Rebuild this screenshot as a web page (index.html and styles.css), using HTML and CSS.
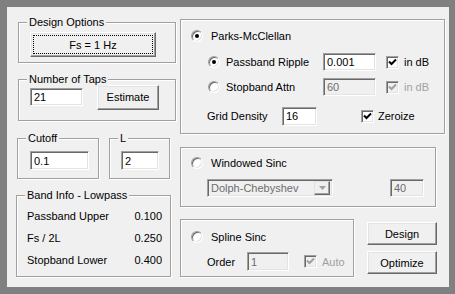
FILE: index.html
```html
<!DOCTYPE html>
<html lang="en">
<head>
    <meta charset="UTF-8">
    <title>FIR Design</title>
    <link rel="stylesheet" href="styles.css">
</head>
<body>
    <div class="panel">
        <!-- Left column: options, taps, cutoff, band info -->
        <div class="col-left">
            <div class="group g-design">
                <span class="legend">Design Options</span>
                <div class="btn btn-fs"><span class="focus">Fs = 1 Hz</span></div>
            </div>

            <div class="group g-taps">
                <span class="legend">Number of Taps</span>
                <div class="edit taps-edit">21</div>
                <div class="btn btn-estimate">Estimate</div>
            </div>

            <div class="pair">
                <div class="group g-cutoff">
                    <span class="legend">Cutoff</span>
                    <div class="edit cutoff-edit">0.1</div>
                </div>
                <div class="group g-l">
                    <span class="legend">L</span>
                    <div class="edit l-edit">2</div>
                </div>
            </div>

            <div class="group g-band">
                <span class="legend">Band Info - Lowpass</span>
                <div class="band-row"><span>Passband Upper</span><span>0.100</span></div>
                <div class="band-row"><span>Fs / 2L</span><span>0.250</span></div>
                <div class="band-row"><span>Stopband Lower</span><span>0.400</span></div>
            </div>
        </div>

        <!-- Right column: design methods -->
        <div class="col-right">
            <div class="group g-parks">
                <div class="row row-1">
                    <span class="radio checked"></span>
                    <span class="label">Parks-McClellan</span>
                </div>
                <div class="row row-2">
                    <div class="opt">
                        <span class="radio checked"></span>
                        <span class="label">Passband Ripple</span>
                    </div>
                    <div class="edit ripple-edit">0.001</div>
                    <span class="check"><svg width="9" height="9" viewBox="0 0 9 9"><polyline points="1,3.5 3.5,6 8,1.5" fill="none" stroke="#000" stroke-width="2"/></svg></span>
                    <span class="check-label">in dB</span>
                </div>
                <div class="row row-3">
                    <div class="opt">
                        <span class="radio"></span>
                        <span class="label">Stopband Attn</span>
                    </div>
                    <div class="edit ripple-edit disabled">60</div>
                    <span class="check disabled"><svg width="9" height="9" viewBox="0 0 9 9"><polyline points="1,3.5 3.5,6 8,1.5" fill="none" stroke="#a0a0a0" stroke-width="2"/></svg></span>
                    <span class="check-label muted">in dB</span>
                </div>
                <div class="row row-4">
                    <span class="grid-label">Grid Density</span>
                    <div class="edit grid-edit">16</div>
                    <span class="check zeroize"><svg width="9" height="9" viewBox="0 0 9 9"><polyline points="1,3.5 3.5,6 8,1.5" fill="none" stroke="#000" stroke-width="2"/></svg></span>
                    <span class="check-label">Zeroize</span>
                </div>
            </div>

            <div class="group g-windowed">
                <div class="row">
                    <span class="radio"></span>
                    <span class="label">Windowed Sinc</span>
                </div>
                <div class="row row-combo">
                    <div class="combo">
                        <span class="combo-text">Dolph-Chebyshev</span>
                        <span class="combo-arrow"><svg width="7" height="4" viewBox="0 0 7 4"><polygon points="0,0 7,0 3.5,4" fill="#a0a0a0"/></svg></span>
                    </div>
                    <div class="edit disabled window-edit">40</div>
                </div>
            </div>

            <div class="bottom">
                <div class="group g-spline">
                    <div class="row">
                        <span class="radio"></span>
                        <span class="label">Spline Sinc</span>
                    </div>
                    <div class="row row-order">
                        <span class="order-label">Order</span>
                        <div class="edit disabled order-edit">1</div>
                        <span class="check disabled auto"><svg width="9" height="9" viewBox="0 0 9 9"><polyline points="1,3.5 3.5,6 8,1.5" fill="none" stroke="#a0a0a0" stroke-width="2"/></svg></span>
                        <span class="check-label muted">Auto</span>
                    </div>
                </div>
                <div class="actions">
                    <div class="btn btn-action">Design</div>
                    <div class="btn btn-action">Optimize</div>
                </div>
            </div>
        </div>
    </div>
</body>
</html>
```

FILE: styles.css
```css
* {
    box-sizing: border-box;
}

body {
    margin: 0;
    width: 455px;
    height: 294px;
    background-color: #808080;
    font-family: "Liberation Sans", Arial, sans-serif;
    font-size: 11px;
    color: #000;
    overflow: hidden;
}

.panel {
    display: flex;
    margin: 7px 0 0 7px;
    width: 442px;
    height: 280px;
    padding-left: 9px;
    background-color: #f0f0f0;
}

.col-left {
    width: 164px;
}

.col-right {
    width: 265px;
    padding-top: 12px;
}

/* group boxes */
.group {
    position: relative;
    border: 1px solid #a0a0a0;
    box-shadow: 1px 1px 0 #fff, inset 1px 1px 0 #fff;
}

.legend {
    position: absolute;
    top: -7px;
    left: 8px;
    padding: 0 2px;
    line-height: 13px;
    background-color: #f0f0f0;
}

.g-design {
    margin: 15px 0 0 2px;
    width: 158px;
    height: 41px;
    padding: 9px 0 0 11px;
}

.g-taps {
    display: flex;
    align-items: center;
    margin: 16px 0 0 2px;
    width: 158px;
    height: 42px;
    padding: 0 0 6px 11px;
}

.pair {
    display: flex;
    margin: 17px 0 0 1px;
}

.g-cutoff {
    width: 82px;
    height: 41px;
    padding: 12px 0 0 12px;
}

.g-l {
    margin-left: 10px;
    width: 61px;
    height: 41px;
    padding: 12px 0 0 11px;
}

.g-band {
    margin-top: 16px;
    width: 155px;
    height: 82px;
    padding: 9px 8px 0 10px;
}

.band-row {
    display: flex;
    justify-content: space-between;
    align-items: center;
    height: 22px;
}

/* buttons */
.btn {
    display: flex;
    align-items: center;
    justify-content: center;
    border: 1px solid;
    border-color: #fff #696969 #696969 #fff;
    box-shadow: inset -1px -1px 0 #a0a0a0, inset 1px 1px 0 #e3e3e3;
    background-color: #f0f0f0;
}

.btn-fs {
    width: 126px;
    height: 25px;
    padding: 2px;
}

.focus {
    display: flex;
    align-items: center;
    justify-content: center;
    width: 100%;
    height: 100%;
    border: 1px dotted #000;
}

.btn-estimate {
    margin-left: 14px;
    width: 62px;
    height: 25px;
}

.btn-action {
    width: 70px;
    height: 23px;
}

.btn-action + .btn-action {
    margin-top: 6px;
}

/* edit fields */
.edit {
    display: flex;
    align-items: center;
    padding-left: 3px;
    height: 18px;
    background-color: #fff;
    border: 1px solid;
    border-color: #a0a0a0 #fff #fff #a0a0a0;
    box-shadow: inset 1px 1px 0 #696969, inset -1px -1px 0 #e3e3e3;
}

.edit.disabled {
    background-color: #f0f0f0;
    color: #6d6d6d;
}

.taps-edit {
    width: 53px;
}

.cutoff-edit {
    width: 59px;
    height: 19px;
}

.l-edit {
    width: 38px;
    height: 19px;
}

.ripple-edit {
    width: 53px;
}

.grid-edit {
    width: 35px;
    height: 19px;
}

.window-edit {
    margin-left: 57px;
    width: 34px;
}

.order-edit {
    width: 42px;
    height: 19px;
}

/* radios and checks */
.row {
    display: flex;
    align-items: center;
    height: 18px;
}

.radio {
    position: relative;
    flex: none;
    width: 12px;
    height: 12px;
    border-radius: 50%;
    border: 1px solid;
    border-color: #a0a0a0 #fff #fff #a0a0a0;
    box-shadow: inset 1px 1px 0 #696969, inset -1px -1px 0 #e3e3e3;
    background-color: #fff;
}

.radio.checked::after {
    content: "";
    position: absolute;
    top: 3px;
    left: 3px;
    width: 4px;
    height: 4px;
    border-radius: 50%;
    background-color: #000;
}

.label {
    margin-left: 8px;
}

.check {
    display: flex;
    align-items: center;
    justify-content: center;
    flex: none;
    margin-left: 10px;
    width: 13px;
    height: 13px;
    border: 1px solid;
    border-color: #a0a0a0 #fff #fff #a0a0a0;
    box-shadow: inset 1px 1px 0 #696969, inset -1px -1px 0 #e3e3e3;
    background-color: #fff;
}

.check.disabled {
    background-color: #f0f0f0;
}

.check-label {
    margin-left: 5px;
}

.muted {
    color: #a0a0a0;
}

.g-parks {
    width: 265px;
    height: 115px;
    padding: 7px 0 0 10px;
}

.row-2 {
    margin-top: 8px;
}

.row-3 {
    margin-top: 7px;
}

.row-4 {
    margin-top: 10px;
    height: 20px;
}

.opt {
    display: flex;
    align-items: center;
    margin-left: 17px;
    width: 115px;
}

.opt .label {
    margin-left: 6px;
}

.grid-label {
    margin-left: 16px;
    width: 75px;
}

.zeroize {
    margin-left: 44px;
}

.row-4 .check-label {
    margin-left: 4px;
}

.g-windowed {
    margin-top: 13px;
    width: 256px;
    height: 60px;
    padding: 6px 0 0 10px;
}

.row-combo {
    margin-top: 7px;
}

.combo {
    display: flex;
    align-items: center;
    justify-content: space-between;
    margin-left: 16px;
    width: 126px;
    height: 18px;
    padding: 2px 2px 2px 3px;
    color: #6d6d6d;
    background-color: #f0f0f0;
    border: 1px solid;
    border-color: #a0a0a0 #fff #fff #a0a0a0;
    box-shadow: inset 1px 1px 0 #696969, inset -1px -1px 0 #e3e3e3;
}

.combo-arrow {
    display: flex;
    align-items: center;
    justify-content: center;
    width: 16px;
    height: 14px;
    border: 1px solid;
    border-color: #e3e3e3 #696969 #696969 #e3e3e3;
    box-shadow: inset -1px -1px 0 #a0a0a0;
    background-color: #f0f0f0;
}

.bottom {
    display: flex;
    margin-top: 12px;
}

.g-spline {
    width: 174px;
    height: 58px;
    padding: 8px 0 0 10px;
}

.row-order {
    margin-top: 6px;
    height: 19px;
}

.order-label {
    margin-left: 16px;
    width: 40px;
}

.auto {
    margin-left: 15px;
}

.actions {
    margin-left: 13px;
    padding-top: 3px;
}
```
